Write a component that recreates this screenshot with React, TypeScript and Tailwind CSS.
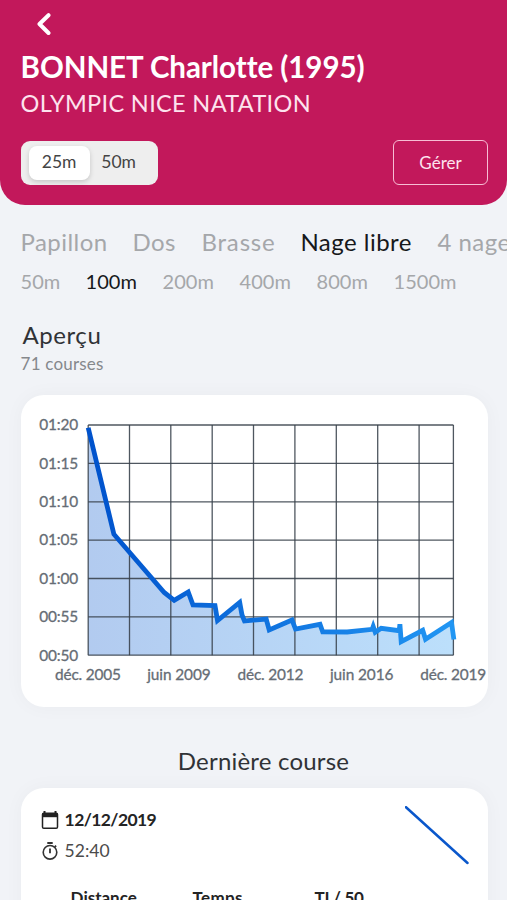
import React, { useState } from 'react';

type Point = [number, number];

const STROKES = [
  { label: 'Papillon', className: 'w-[112px] tracking-[0.02em]' },
  { label: 'Dos', className: 'w-[69px] tracking-[0.02em]' },
  { label: 'Brasse', className: 'w-[99px] tracking-[0.035em]' },
  { label: 'Nage libre', className: 'w-[137px] tracking-[0.02em]' },
  { label: '4 nages', className: 'w-[90px] tracking-[0.02em]' },
];

const DISTANCES = [
  { label: '50m', className: 'w-[65px]' },
  { label: '100m', className: 'w-[77px]' },
  { label: '200m', className: 'w-[77px]' },
  { label: '400m', className: 'w-[77px]' },
  { label: '800m', className: 'w-[77px]' },
  { label: '1500m', className: 'w-[64px]' },
];

const GRID_X = [67.5, 108.8, 150.1, 191.5, 232.8, 274.2, 315.6, 357, 398.4, 432.7];
const GRID_Y = [30, 68.4, 106.8, 145.1, 183.5, 221.8, 260.2];

const Y_LABELS = ['01:20', '01:15', '01:10', '01:05', '01:00', '00:55', '00:50'];
const X_LABELS = [
  { x: 67.3, label: 'déc. 2005' },
  { x: 158.3, label: 'juin 2009' },
  { x: 249.8, label: 'déc. 2012' },
  { x: 341, label: 'juin 2016' },
  { x: 432.6, label: 'déc. 2019' },
];

const POINTS: Point[] = [
  [67.5, 32.7], [93.2, 139.2], [143.5, 197.5], [153.5, 205.3], [167.5, 197],
  [172.3, 210], [194.3, 210.7], [196.8, 225.5], [219, 207.5], [221.3, 220],
  [223.8, 226], [245.5, 224], [248.5, 235], [271.3, 225], [274.8, 234],
  [299.3, 229.3], [302, 236.8], [326.5, 237], [351.5, 234.3], [352.5, 231.5],
  [354.5, 237.2], [360.5, 233.3], [378.5, 235.7], [379.2, 229.3], [380.5, 246.7],
  [402, 235.3], [404.8, 244.3], [430.8, 227.5], [433.2, 244.5],
];

const linePath = POINTS.map(([x, y], i) => `${i ? 'L' : 'M'}${x} ${y}`).join(' ');
const areaPath = `${linePath} L432.7 260.2 L67.5 260.2 Z`;

const TimesChart: React.FC = () => (
  <svg width="467" height="312" viewBox="0.3 0 467 312" className="block">
    <defs>
      <linearGradient id="times" gradientUnits="userSpaceOnUse" x1="67" y1="0" x2="433" y2="0">
        <stop offset="0" stopColor="#0052cc" />
        <stop offset="1" stopColor="#2196f3" />
      </linearGradient>
    </defs>
    <path d={areaPath} fill="url(#times)" fillOpacity="0.3" />
    <g stroke="#37404a" strokeOpacity="0.88" strokeWidth="1.3">
      {GRID_X.map(x => <line key={x} x1={x} y1="30" x2={x} y2="260.2" />)}
      {GRID_Y.map(y => <line key={y} x1="67.5" y1={y} x2="432.7" y2={y} />)}
    </g>
    <path d={linePath} fill="none" stroke="url(#times)" strokeWidth="4.8" strokeMiterlimit="6" />
    <g fill="#666d75" stroke="#666d75" strokeWidth="0.3" fontSize="15.4">
      {Y_LABELS.map((label, i) => (
        <text key={label} x="18.6" y={GRID_Y[i] + 5.3} textLength="39">{label}</text>
      ))}
      {X_LABELS.map(({ x, label }) => (
        <text key={label} x={x} y="285" textAnchor="middle" textLength={label[0] === 'd' ? 66 : 63.5}>{label}</text>
      ))}
    </g>
  </svg>
);

const CalendarIcon: React.FC = () => (
  <svg width="18" height="20" viewBox="0 0 18 20">
    <path d="M3.5 1v3M14.5 1v3" stroke="#222" strokeWidth="2" />
    <rect x="1.5" y="3.3" width="15" height="15" rx="1.3" fill="none" stroke="#222" strokeWidth="1.5" />
    <path d="M1.5 3h15v4.2h-15z" fill="#222" />
  </svg>
);

const StopwatchIcon: React.FC = () => (
  <svg width="18" height="20" viewBox="0 0 18 20" fill="none" stroke="#333">
    <circle cx="9" cy="11.3" r="6.8" strokeWidth="1.6" />
    <path d="M6.3 2h5.4M9 7.4v4.8M13.7 6.1l1.4-1.4" strokeWidth="1.8" />
  </svg>
);

const App: React.FC = () => {
  const [pool, setPool] = useState('25m');
  const [stroke, setStroke] = useState('Nage libre');
  const [distance, setDistance] = useState('100m');

  return (
    <div className="h-[900px] w-[507px] overflow-hidden bg-[#f1f3f7] font-[Lato,sans-serif] text-[#303236]">
      <header className="h-[205px] rounded-b-[25px] bg-[#c2185b] pl-[20.6px] pr-[19px] pt-3 text-white">
        <button className="ml-3.5 block h-6 w-4">
          <svg width="16" height="24" viewBox="0 0 16 24" fill="none" stroke="white" strokeWidth="4" strokeLinecap="round" strokeLinejoin="round">
            <path d="M13.5 3.2 4.5 12l9 9" />
          </svg>
        </button>
        <h1 className="mt-[13px] h-9 whitespace-nowrap text-[29.5px] font-bold leading-9 tracking-[-0.05px]">BONNET Charlotte (1995)</h1>
        <p className="mt-px h-8 whitespace-nowrap text-[23.5px] leading-[35px] tracking-[0.34px] text-[#fde3ee]">OLYMPIC NICE NATATION</p>
        <div className="mt-[22px] flex items-start justify-between">
          <div className="mt-[0.6px] flex h-11 w-[137px] items-center rounded-[9px] bg-[#eeeeee] pl-2 text-[17.5px] text-[#444]">
            {['25m', '50m'].map(size => (
              <button
                key={size}
                onClick={() => setPool(size)}
                className={size === pool
                  ? 'h-[34px] w-[61px] rounded-[8px] bg-white shadow-[0_2px_5px_rgba(0,0,0,0.17)]'
                  : 'h-[34px] w-[58px]'}
              >
                {size}
              </button>
            ))}
          </div>
          <button className="h-[45px] w-[95px] rounded-[6px] border-[1.5px] border-[#f7bdd4] text-[17px] text-[#fde3ee]">Gérer</button>
        </div>
      </header>

      <nav className="mt-5 flex h-[34px] pl-[20.4px] text-[24px] leading-[34px]">
        {STROKES.map(({ label, className }) => (
          <button
            key={label}
            onClick={() => setStroke(label)}
            className={`shrink-0 whitespace-nowrap text-left ${className} ${label === stroke ? 'text-[#16181b]' : 'text-[#a5a7aa]'}`}
          >
            {label}
          </button>
        ))}
      </nav>
      <nav className="mt-2 flex h-7 pl-[20.6px] text-[20px] leading-7">
        {DISTANCES.map(({ label, className }) => (
          <button
            key={label}
            onClick={() => setDistance(label)}
            className={`shrink-0 text-left ${className} ${label === distance ? 'text-[#16181b]' : 'text-[#a5a7aa]'}`}
          >
            {label}
          </button>
        ))}
      </nav>

      <section className="px-[20.6px] pt-[23px]">
        <h2 className="h-[34px] pl-0.5 text-[24px] leading-[34px] tracking-[0.55px]">Aperçu</h2>
        <p className="h-6 text-[17px] leading-6 tracking-[0.2px] text-[#85888c]">71 courses</p>
      </section>

      <section className="ml-[20.6px] mt-[19px] h-[312px] w-[467px] rounded-[23px] bg-white shadow-[0_0_20px_rgba(0,0,0,0.035)]">
        <TimesChart />
      </section>

      <h2 className="mt-[35px] h-[37px] pl-5 text-center text-[24px] leading-[37px] tracking-[0.2px]">Dernière course</h2>

      <section className="ml-[20.6px] mt-[9px] h-[200px] w-[467px] rounded-t-[23px] bg-white pt-[18px] shadow-[0_0_20px_rgba(0,0,0,0.035)]">
        <div className="flex justify-between pl-5 pr-[18.5px]">
          <div>
            <div className="flex h-7 items-center gap-[6px] text-[17.5px] font-bold tracking-[-0.6px] text-[#242424]">
              <CalendarIcon />
              <span>12/12/2019</span>
            </div>
            <div className="mt-[3px] flex h-7 items-center gap-[6px] text-[17.5px] text-[#4b4b4b]">
              <StopwatchIcon />
              <span>52:40</span>
            </div>
          </div>
          <svg width="64" height="60" viewBox="0 0 64 60">
            <path d="M1 1.2 62.5 57" stroke="#0a57cb" strokeWidth="2.5" strokeLinecap="round" />
          </svg>
        </div>
        <div className="mt-[18px] flex pl-[50px] text-[17px] font-bold leading-7 text-[#242424]">
          <span className="w-[122px]">Distance</span>
          <span className="w-[122px] tracking-[0.3px]">Temps</span>
          <span className="tracking-[-0.3px]">TL/ 50</span>
        </div>
      </section>
    </div>
  );
};

export default App;
